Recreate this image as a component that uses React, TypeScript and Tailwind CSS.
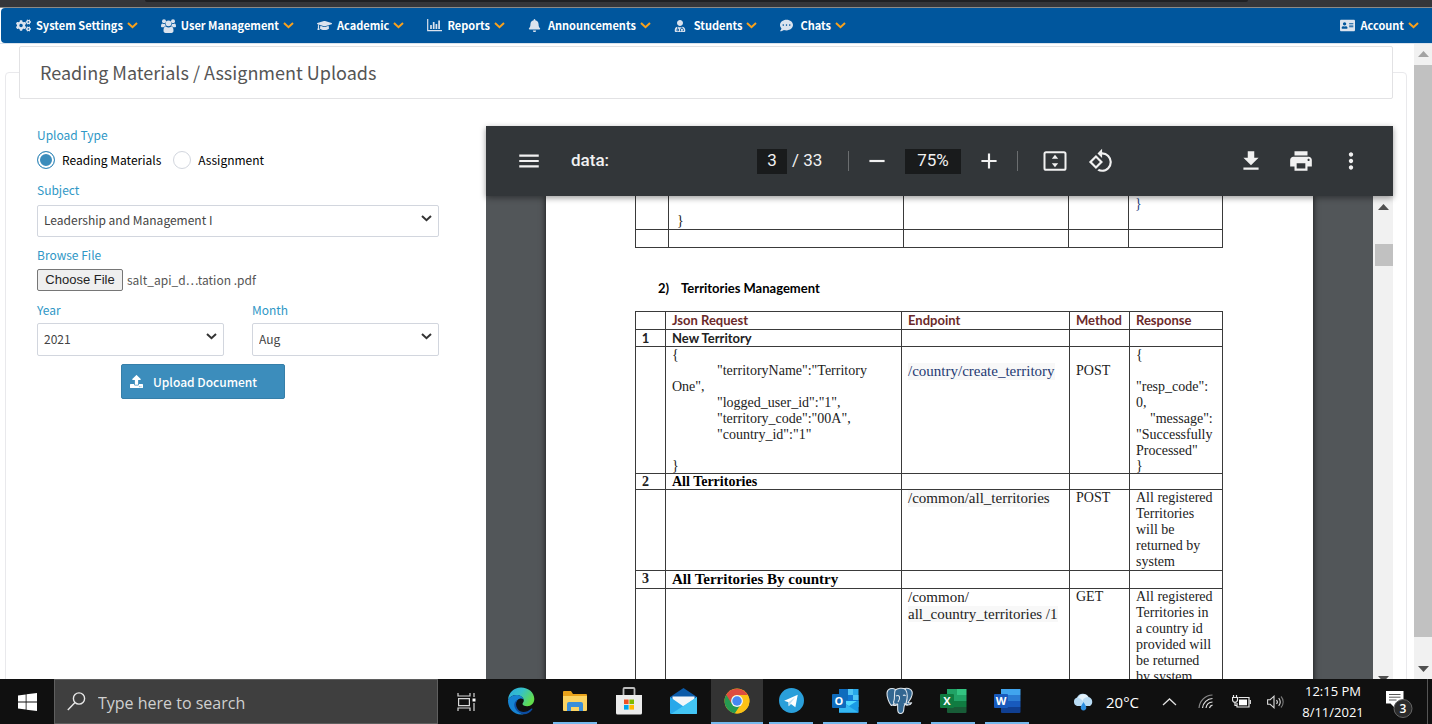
import { useRef, useState } from 'react'
import type { ReactNode } from 'react'
import { FaAddressCard, FaBell, FaCogs, FaCommentDots, FaGraduationCap, FaUpload, FaUserMd } from 'react-icons/fa'
import { MdAdd, MdFileDownload, MdMenu, MdMoreVert, MdPrint, MdRemove, MdRotate90DegreesCcw } from 'react-icons/md'

function BarChartIcon() {
  return (
    <svg width="15" height="13" viewBox="0 0 15 13" fill="none" stroke="currentColor">
      <path d="M.7 0v11.6H15" strokeWidth="1.2" />
      <path d="M4 10V6M6.7 10V3M9.4 10V5M12.1 10V1.5" strokeWidth="1.7" />
    </svg>
  )
}

function UsersIcon() {
  return (
    <svg width="15" height="14" viewBox="0 0 15 14" fill="currentColor">
      <circle cx="3" cy="2.2" r="2" />
      <circle cx="12" cy="2.2" r="2" />
      <circle cx="7.500" cy="4.300" r="2.900" />
      <path d="M0 7.500C0 5.500.500 4.500 1.500 4.500c1 .600 1.800.600 2.500.300.100 1 .300 1.700.900 2.400-1 0-1.700.400-2.200 1H1.200C.500 8.200 0 8 0 7.500zM15 7.500c0-2-.500-3-1.500-3-1 .600-1.800.600-2.500.300-.100 1-.300 1.700-.900 2.400 1 0 1.700.400 2.200 1h1.500c.700 0 1.200-.200 1.200-.700z" />
      <path d="M2.500 11.800c0-2.300.600-4.200 2.300-4.200 1.700 1.300 3.700 1.300 5.400 0 1.700 0 2.300 1.900 2.300 4.200 0 1.300-.800 2.200-2 2.200h-6c-1.200 0-2-.900-2-2.200z" />
    </svg>
  )
}

function Chevron({ className }: { className: string }) {
  return (
    <svg width="11" height="7" viewBox="0 0 11 7" className={className} fill="none" stroke="currentColor" strokeWidth="2">
      <path d="M1 1l4.5 4.2L10 1" />
    </svg>
  )
}

function NavItem({ icon, label }: { icon: ReactNode; label: string }) {
  return (
    <a href="#" className="flex items-center">
      <span className="flex w-5 items-center text-[#dbe3ee]">{icon}</span>
      {label}
      <Chevron className="ml-1 text-[#f9a11b]" />
    </a>
  )
}

function NavBar() {
  return (
    <nav className="ml-px flex h-[35px] shrink-0 items-center gap-[23px] rounded-l-sm bg-[#00569d] pr-[13px] pl-[15px] text-[11px] font-bold text-white">
      <NavItem icon={<FaCogs size={15} />} label="System Settings" />
      <NavItem icon={<UsersIcon />} label="User Management" />
      <NavItem icon={<FaGraduationCap size={15} />} label="Academic" />
      <NavItem icon={<BarChartIcon />} label="Reports" />
      <NavItem icon={<FaBell size={13} />} label="Announcements" />
      <NavItem icon={<FaUserMd size={12} />} label="Students" />
      <NavItem icon={<FaCommentDots size={13} />} label="Chats" />
      <div className="ml-auto">
        <NavItem icon={<FaAddressCard size={15} />} label="Account" />
      </div>
    </nav>
  )
}

function Select({ id, label, options, className }: { id: string; label: string; options: string[]; className: string }) {
  return (
    <div className="flex flex-1 flex-col">
      <label htmlFor={id} className="text-[#2f97c6]">{label}</label>
      <div className={className}>
        <select id={id} className="h-full w-full appearance-none rounded-xs border border-[#d2d6de] bg-white px-1.5 pb-0.5 text-[#444]">
          {options.map((option) => (
            <option key={option}>{option}</option>
          ))}
        </select>
        <Chevron className="pointer-events-none absolute top-2.5 right-[7px] text-[#333]" />
      </div>
    </div>
  )
}

function UploadForm() {
  const fileInput = useRef<HTMLInputElement>(null)
  const [fileName, setFileName] = useState('salt_api_d…tation .pdf')
  const radio =
    'mr-[7px] size-[18px] appearance-none rounded-full border border-[#d2d6de] bg-white checked:border-[#3c8dbc] checked:bg-[#3c8dbc] checked:shadow-[inset_0_0_0_2px_white]'

  return (
    <form className="w-[402px] shrink-0 text-[12px] leading-[18px]">
      <div className="text-[#2f97c6]">Upload Type</div>
      <div className="mt-[7px] flex gap-3 text-black">
        <label className="flex items-center">
          <input type="radio" name="type" defaultChecked className={radio} />
          Reading Materials
        </label>
        <label className="flex items-center">
          <input type="radio" name="type" className={radio} />
          Assignment
        </label>
      </div>
      <div className="mt-3 flex">
        <Select id="subject" label="Subject" options={['Leadership and Management I']} className="relative mt-1.5 h-8" />
      </div>
      <label htmlFor="file" className="mt-[9px] block text-[#2f97c6]">Browse File</label>
      <div className="mt-[5px] flex h-[22px] items-center">
        <input
          id="file"
          type="file"
          ref={fileInput}
          className="hidden"
          onChange={(e) => setFileName(e.target.files?.[0]?.name ?? fileName)}
        />
        <button
          type="button"
          onClick={() => fileInput.current?.click()}
          className="mr-1 h-full w-[86px] rounded-xs border border-[#767676] bg-[#efefef] font-['Liberation_Sans',sans-serif] text-[13px] leading-5 text-[#222]"
        >
          Choose File
        </button>
        <span className="text-[#555]">{fileName}</span>
      </div>
      <div className="mt-[10px] flex gap-7">
        <Select id="year" label="Year" options={['2021', '2020']} className="relative mt-1 h-[33px]" />
        <Select id="month" label="Month" options={['Aug', 'Sep']} className="relative mt-1 h-[33px]" />
      </div>
      <button type="button" className="mt-2 ml-[84px] flex h-[35px] w-[164px] items-center rounded-xs border border-[#367fa9] bg-[#3c8dbc] px-2 font-medium text-white">
        <FaUpload size={13} className="mr-2.5" />
        Upload Document
      </button>
    </form>
  )
}

function PdfToolbar() {
  return (
    <div className="relative z-10 flex h-[70px] shrink-0 items-center bg-[#323639] pr-[29px] pl-[30px] font-['Roboto',sans-serif] text-[17px] text-[#f1f1f1] shadow-[0_2px_6px_rgba(0,0,0,0.4)]">
      <div className="flex w-[241px] items-center gap-[29px]">
        <button type="button" aria-label="Menu"><MdMenu size={26} /></button>
        <span className="font-medium">data:</span>
      </div>
      <input aria-label="Page" defaultValue="3" className="h-[25px] w-[30px] bg-[#191b1c] text-center" />
      <span className="w-9 pl-[5px] whitespace-nowrap">/ 33</span>
      <span className="ml-[25px] h-5 w-px bg-[#6b6e70]" />
      <button type="button" aria-label="Zoom out" className="mx-[15px]"><MdRemove size={26} /></button>
      <input aria-label="Zoom" defaultValue="75%" className="h-[25px] w-14 bg-[#191b1c] text-center" />
      <button type="button" aria-label="Zoom in" className="mx-[15px]"><MdAdd size={26} /></button>
      <span className="h-5 w-px bg-[#6b6e70]" />
      <button type="button" aria-label="Fit to page" className="ml-6">
        <svg width="26" height="26" viewBox="0 0 26 26" fill="currentColor">
          <rect x="2.500" y="4.200" width="21" height="17.600" rx="1.600" fill="none" stroke="currentColor" strokeWidth="2" />
          <path d="M13 6.800l3.200 4H9.800zM13 19.200l3.200-4H9.800z" />
        </svg>
      </button>
      <button type="button" aria-label="Rotate" className="ml-5"><MdRotate90DegreesCcw size={26} /></button>
      <div className="ml-auto flex gap-6">
        <button type="button" aria-label="Download"><MdFileDownload size={26} /></button>
        <button type="button" aria-label="Print"><MdPrint size={26} /></button>
        <button type="button" aria-label="More"><MdMoreVert size={26} /></button>
      </div>
    </div>
  )
}

const cell = 'border border-[#3a3a3a] px-1.5 align-top'
const num = 'border border-[#3a3a3a] p-0 pr-2.5 text-center align-top font-bold'
const calibri = "font-['Lato',sans-serif] font-bold text-[13px] leading-4"
const calibriHead = "font-['Lato',sans-serif] font-bold text-[13px] leading-[17px]"

function PdfPage() {
  return (
    <div className="mx-auto w-[767px] shrink-0 bg-white pl-[89px] font-['Liberation_Serif',serif] text-[14px] leading-4 text-[#222] shadow-[0_0_6px_rgba(0,0,0,0.8)]">
      <table className="w-[588px] table-fixed border-collapse">
        <colgroup>
          <col className="w-[33px]" />
          <col className="w-[235px]" />
          <col className="w-[165px]" />
          <col className="w-[60px]" />
          <col />
        </colgroup>
        <tbody>
          <tr className="h-[33px]">
            <td className="border border-t-0 border-[#3a3a3a]" />
            <td className="border border-t-0 border-[#3a3a3a] p-0 pl-2 align-bottom">{'}'}</td>
            <td className="border border-t-0 border-[#3a3a3a]" />
            <td className="border border-t-0 border-[#3a3a3a]" />
            <td className="border border-t-0 border-[#3a3a3a] p-0 pl-1.5 align-top text-[#1f3f80]">{'}'}</td>
          </tr>
          <tr className="h-[18px]">
            <td className={cell} />
            <td className={cell} />
            <td className={cell} />
            <td className={cell} />
            <td className={cell} />
          </tr>
        </tbody>
      </table>

      <h2 className="mt-8 mb-[15px] flex gap-3 pl-[23px] font-['Lato',sans-serif] text-[13px] font-bold leading-4 text-black">
        <span>2)</span>
        <span>Territories Management</span>
      </h2>

      <table className="w-[588px] table-fixed border-collapse">
        <colgroup>
          <col className="w-[30px]" />
          <col className="w-[236px]" />
          <col className="w-[168px]" />
          <col className="w-[60px]" />
          <col />
        </colgroup>
        <thead className="text-left text-[#6b2a2a]">
          <tr className="h-[18px]">
            <th className={cell} />
            <th className={cell}><div className={calibriHead}>Json Request</div></th>
            <th className={cell}><div className={calibriHead}>Endpoint</div></th>
            <th className={cell}><div className={calibriHead}>Method</div></th>
            <th className={cell}><div className={calibriHead}>Response</div></th>
          </tr>
        </thead>
        <tbody>
          <tr className="h-[17px]">
            <td className={num}><div className={calibri}>1</div></td>
            <td className={cell}><div className={calibri}>New Territory</div></td>
            <td className={cell} />
            <td className={cell} />
            <td className={cell} />
          </tr>
          <tr>
            <td className={cell} />
            <td className={cell}>
              <div>{'{'}</div>
              <div className="indent-[45px]">"territoryName":"Territory One",</div>
              <div className="pl-[45px]">"logged_user_id":"1",</div>
              <div className="pl-[45px]">"territory_code":"00A",</div>
              <div className="pl-[45px]">"country_id":"1"</div>
              <div className="pt-[15px] leading-[15px]">{'}'}</div>
            </td>
            <td className={cell}>
              <div className="mt-4 w-fit bg-[#f8f8f8] text-[15px] leading-[17px] text-[#1f3a73]">/country/create_territory</div>
            </td>
            <td className={cell}><div className="pt-4">POST</div></td>
            <td className={cell}>
              <div>{'{'}</div>
              <div className="pt-4">"resp_code":</div>
              <div>0,</div>
              <div className="pl-3.5">"message":</div>
              <div>"Successfully</div>
              <div className="leading-[15px]">Processed"</div>
              <div className="leading-[15px]">{'}'}</div>
            </td>
          </tr>
          <tr className="h-4">
            <td className={num}><div className="leading-[15px]">2</div></td>
            <td className={cell}><div className="font-bold leading-[15px] text-black">All Territories</div></td>
            <td className={cell} />
            <td className={cell} />
            <td className={cell} />
          </tr>
          <tr>
            <td className={cell} />
            <td className={cell} />
            <td className={cell}><div className="w-fit bg-[#f8f8f8] text-[15px] leading-[17px]">/common/all_territories</div></td>
            <td className={cell}>POST</td>
            <td className={cell}>All registered Territories will&nbsp;be returned by system</td>
          </tr>
          <tr className="h-[18px]">
            <td className={num}>3</td>
            <td className={cell}><div className="text-[15px] font-bold leading-[17px] text-black">All Territories By country</div></td>
            <td className={cell} />
            <td className={cell} />
            <td className={cell} />
          </tr>
          <tr>
            <td className={cell} />
            <td className={cell} />
            <td className={cell}>
              <div className="text-[15px] leading-[17px]">
                /common/<br />
                <span className="bg-[#f8f8f8] whitespace-nowrap">all_country_territories /1</span>
              </div>
            </td>
            <td className={cell}>GET</td>
            <td className={cell}>All registered Territories in a&nbsp;country&nbsp;id provided will be returned by&nbsp;system</td>
          </tr>
        </tbody>
      </table>
    </div>
  )
}

function Arrow({ down, className }: { down?: boolean; className: string }) {
  return (
    <svg width="11" height="6" viewBox="0 0 11 6" fill="currentColor" className={className}>
      <path d={down ? 'M0 0h11L5.500 6z' : 'M0 6h11L5.500 0z'} />
    </svg>
  )
}

function PdfViewer() {
  return (
    <div className="flex min-w-0 flex-1 flex-col">
      <PdfToolbar />
      <div className="flex overflow-hidden bg-[#525659]">
        <div className="flex min-w-0 flex-1">
          <PdfPage />
        </div>
        <div className="flex w-5 flex-col items-center bg-[#f1f1f1] pt-2 pb-1">
          <Arrow className="text-[#505050]" />
          <div className="mt-[34px] ml-0.5 h-[22px] w-[18px] bg-[#c1c1c1]" />
          <Arrow down className="mt-auto text-[#505050]" />
        </div>
      </div>
    </div>
  )
}

function EdgeIcon() {
  return (
    <svg width="28" height="28" viewBox="0 0 28 28">
      <defs>
        <linearGradient id="edgeTop" x1="0" y1="0" x2="1" y2="0.500">
          <stop offset="0" stopColor="#2aa7e0" />
          <stop offset="0.500" stopColor="#35c1c9" />
          <stop offset="1" stopColor="#62dd4c" />
        </linearGradient>
      </defs>
      <path d="M1 13C1.500 5.500 7 .500 14 .500c7.500 0 13.300 5 13.300 11.500 0 4.500-3.300 7.200-7 7.200-3.300 0-4.800-1.200-4.800-2.300 0-.900 1.300-1.400 1.300-3.400C16.800 10.500 13.500 8 9.500 8 5.500 8 2.300 10 1 13z" fill="url(#edgeTop)" />
      <path d="M1 13C2.300 10 5.500 8 9.500 8c3.800 0 6.500 2 7.100 4.300-1-.800-2.300-1-3.400-.800-2.700.500-4.400 3-4.400 6 0 4.500 3.500 8.700 8 9.700-1 .200-1.800.300-2.800.300C6.500 27.500.700 21 1 13z" fill="#1683d2" />
      <path d="M10.500 13c-2 2.500-2 6.300.300 9.300 2.800 3.600 8.500 4 13.700-.700.600-.500 1.200.200.800.800-2 3-5 4.600-8.500 4.900-5.500-.800-9.500-5-9.500-9.500 0-2.200 1.300-4 3.200-4.800z" fill="#0c4da2" />
    </svg>
  )
}

function ExplorerIcon() {
  return (
    <svg width="26" height="22" viewBox="0 0 26 22">
      <path d="M1 2a1 1 0 0 1 1-1h7l2 3h13a1 1 0 0 1 1 1v15H1z" fill="#e9a31b" />
      <path d="M1 6h24v14a1 1 0 0 1-1 1H2a1 1 0 0 1-1-1z" fill="#fcd462" />
      <path d="M5 21v-7a2 2 0 0 1 2-2h12a2 2 0 0 1 2 2v7h-4v-4H9v4z" fill="#3a8fd9" />
    </svg>
  )
}

function StoreIcon() {
  return (
    <svg width="28" height="28" viewBox="0 0 28 28">
      <path d="M8.500 9V2a1 1 0 0 1 1-1h9a1 1 0 0 1 1 1v7" fill="none" stroke="#bdbdbd" strokeWidth="1.800" />
      <path d="M1 8h26v18a1.500 1.500 0 0 1-1.500 1.500h-23A1.500 1.500 0 0 1 1 26z" fill="#ececec" />
      <path d="M9 12.500h4.600v4.600H9z" fill="#f25022" />
      <path d="M14.400 12.500H19v4.600h-4.600z" fill="#7fba00" />
      <path d="M9 18h4.600v4.600H9z" fill="#00a4ef" />
      <path d="M14.400 18H19v4.600h-4.600z" fill="#ffb900" />
    </svg>
  )
}

function MailIcon() {
  return (
    <svg width="27" height="26" viewBox="0 0 27 26">
      <path d="M0 9L13.500 0 27 9v6H0z" fill="#0a5aa8" />
      <path d="M2.500 8.500h22V14L13.500 20 2.500 14z" fill="#f3f6f9" />
      <path d="M0 9l13.500 9.500L27 9v16a1 1 0 0 1-1 1H1a1 1 0 0 1-1-1z" fill="#28a8ea" />
      <path d="M27 9v16a1 1 0 0 1-1 1H1z" fill="#43c5f4" />
    </svg>
  )
}

function ChromeIcon() {
  return (
    <svg width="26" height="26" viewBox="0 0 48 48">
      <circle cx="24" cy="24" r="23" fill="#fbc116" />
      <path d="M24 24L4.100 12.500a23 23 0 0 0 16.200 34.200L31 30z" fill="#269a51" />
      <path d="M4.100 12.500A23 23 0 0 1 44 13H24a11 11 0 0 0-9.600 16.500z" fill="#dd4c3f" />
      <path d="M24 13h20a23 23 0 0 1-23.500 33.700L33.500 29.500z" fill="#fbc116" />
      <circle cx="24" cy="24" r="11" fill="#f5f5f5" />
      <circle cx="24" cy="24" r="8.800" fill="#4688f1" />
    </svg>
  )
}

function TelegramIcon() {
  return (
    <svg width="25" height="25" viewBox="0 0 24 24">
      <circle cx="12" cy="12" r="12" fill="#2a9fda" />
      <path d="M5 12.300L18 6.500l-2.300 12-4.200-3.200-2.200 2.200-.200-3.800z" fill="#fff" />
      <path d="M9.100 13.700l6.500-4.900-4.300 5.700-2 3z" fill="#c3dff0" />
    </svg>
  )
}

function OfficeIcon({ letter, kind }: { letter: string; kind: 'outlook' | 'excel' | 'word' }) {
  const colors = {
    outlook: ['#28a8ea', '#0f78d4', '#50d9ff', '#14447d', '#0f6cbd'],
    excel: ['#33c481', '#21a366', '#107c41', '#185c37', '#107c41'],
    word: ['#41a5ee', '#2b7cd3', '#185abd', '#103f91', '#185abd'],
  }[kind]
  return (
    <svg width="27" height="26" viewBox="0 0 27 26">
      <path d="M7 1h19.500v6H7z" fill={colors[0]} />
      <path d="M7 7h19.500v6H7z" fill={colors[1]} />
      <path d="M7 13h19.500v6H7z" fill={colors[2]} />
      <path d="M7 19h19.500v5a1 1 0 0 1-1 1H8a1 1 0 0 1-1-1z" fill={colors[3]} />
      {kind === 'outlook' && (
        <>
          <path d="M7 1h9v11H7z" fill="#0f6cbd" />
          <path d="M16 1h5v6h-5zM21 7h5.500v5H21z" fill="#50c5f5" />
          <path d="M7 12l10 6 9.500-6v12.500H7z" fill="#1a9be6" />
          <path d="M7 12l19.500 12.500H7z" fill="#35b8f1" />
        </>
      )}
      {kind === 'excel' && <path d="M7 1h10v12H7z" fill="#21a366" />}
      <rect x="0" y="6" width="14" height="14" rx="1" fill={colors[4]} />
      <text x="7" y="17" textAnchor="middle" fontSize="11" fontWeight="700" fill="#fff" fontFamily="Open Sans, sans-serif">
        {letter}
      </text>
    </svg>
  )
}

function PostgresIcon() {
  return (
    <svg width="27" height="27" viewBox="0 0 27 27" fill="#336791" stroke="#dfe6ec" strokeWidth="1.100" strokeLinejoin="round">
      <path d="M9.500 2.500C6 .500 1.500 1.500 1 6c-.300 3.500 2 10 4 12 1 1 2.200-.200 4-2z" />
      <path d="M17 2c4-1.500 8-.500 9 2.500 1 3.500-2 8.500-4 11 1 .800 2.500.500 3.700.300-1 2-3.500 2.500-5.700 2z" />
      <path d="M9 3.500c2-2.500 8-3 10.500-1 2 3 2 9 .500 14-2 .500-2 3-2.300 6.500-.200 2-1.200 3.500-3.200 3.500-2.200 0-2.700-1.500-2.800-4-.100-2 .200-4-.300-5.500-3.500 1-4.400-1-3.400-3.500 1-3 0-6.500 1-10z" />
      <path d="M10 9c1.500-1 3-.500 3.500 1s-.500 3.500-1.500 5M17 8.500c1-.700 2-.500 2.500.500M12 17c-1 1.500-3.500 2-5 1M18 16.500c1 1.500 2.500 1.500 4 1.200" fill="none" />
    </svg>
  )
}

const apps: { name: string; icon: ReactNode; open?: boolean; active?: boolean }[] = [
  { name: 'Edge', icon: <EdgeIcon /> },
  { name: 'File Explorer', icon: <ExplorerIcon />, open: true },
  { name: 'Store', icon: <StoreIcon /> },
  { name: 'Mail', icon: <MailIcon /> },
  { name: 'Chrome', icon: <ChromeIcon />, active: true },
  { name: 'Telegram', icon: <TelegramIcon />, open: true },
  { name: 'Outlook', icon: <OfficeIcon kind="outlook" letter="O" />, open: true },
  { name: 'pgAdmin', icon: <PostgresIcon />, open: true },
  { name: 'Excel', icon: <OfficeIcon kind="excel" letter="X" />, open: true },
  { name: 'Word', icon: <OfficeIcon kind="word" letter="W" />, open: true },
]

function Taskbar() {
  return (
    <footer className="flex h-[45px] shrink-0 items-stretch bg-[#101010] font-['Open_Sans',sans-serif] text-white">
      <button type="button" aria-label="Start" className="flex w-[54px] items-center justify-center">
        <svg width="19" height="18" viewBox="0 0 19 18" fill="currentColor">
          <path d="M0 2.500L7.700 1.400v7.200H0zM8.500 1.300L19 0v8.600H8.500zM0 9.400h7.700v7.200L0 15.500zM8.500 9.400H19V18L8.500 16.700z" />
        </svg>
      </button>
      <label className="flex w-96 items-center border border-[#5f5f5f] bg-[#3f3f3f] pl-3">
        <svg width="19" height="19" viewBox="0 0 19 19" fill="none" stroke="#e8e8e8" strokeWidth="1.400" className="mr-3">
          <circle cx="12" cy="6.500" r="5.600" />
          <path d="M8 10.500L.800 18" />
        </svg>
        <input aria-label="Search" placeholder="Type here to search" className="min-w-0 flex-1 pt-0.5 text-[16px] placeholder:text-[#d0d0d0]" />
      </label>
      <button type="button" aria-label="Task View" className="flex w-14 items-center justify-center">
        <svg width="19" height="18" viewBox="0 0 19 18" fill="none" stroke="#d8d8d8" strokeWidth="1.200">
          <path d="M1 0v3h12V0M1 18v-3h12v3M1.600 5.600h10.800v7H1.600zM17 0v4M17 10v8" />
          <path d="M15.500 5.500h3v3h-3z" fill="#fff" stroke="none" />
        </svg>
      </button>
      {apps.map((app) => (
        <button key={app.name} type="button" aria-label={app.name} className="flex w-[54px] justify-center">
          <span
            className={
              app.active
                ? 'flex h-full w-[52px] items-center justify-center border-b-2 border-[#76b9ed] bg-[#333]'
                : app.open
                  ? 'flex h-full w-11 items-center justify-center border-b-2 border-[#76b9ed]'
                  : 'flex h-full w-11 items-center justify-center border-b-2 border-transparent'
            }
          >
            {app.icon}
          </span>
        </button>
      ))}
      <div className="ml-auto flex items-center">
        <svg width="23" height="18" viewBox="0 0 23 18">
          <path d="M5 13a4.500 4.500 0 0 1 0-8.500A6.500 6.500 0 0 1 16.500 4 5 5 0 0 1 18 13z" fill="#b9dcf5" />
          <path d="M6 5A6 6 0 0 1 16.500 4c-3 0-5 1-6 4C9.500 6 8 5 6 5z" fill="#e6f3fc" />
          <path d="M11.500 9c1.500 2.500 2.800 4 2.800 5.600a2.800 2.800 0 0 1-5.600 0C8.700 13 10 11.500 11.500 9z" fill="#2f8fe0" />
        </svg>
        <span className="ml-[11px] w-14 pt-0.5 text-[15px]">20°C</span>
        <svg width="15" height="8" viewBox="0 0 15 8" fill="none" stroke="#e0e0e0" strokeWidth="1.300">
          <path d="M1 7l6.500-6L14 7" />
        </svg>
        <svg width="16" height="15" viewBox="0 0 16 15" fill="none" strokeWidth="1.200" className="ml-[21px]">
          <path d="M1 14A14 14 0 0 1 14.500 1" stroke="#888" />
          <path d="M4.500 14A10.500 10.500 0 0 1 14.500 4.500M8 14a7 7 0 0 1 6.500-6M11.500 14a4 4 0 0 1 3-2.800" stroke="#ddd" />
        </svg>
        <svg width="19" height="13" viewBox="0 0 19 13" fill="none" stroke="#e8e8e8" strokeWidth="1.200" className="ml-[18px]">
          <path d="M1.500 0v2.500M4.500 0v2.500M.500 2.500h5v2.300a2.500 2.500 0 0 1-5 0zM3 7v3.500h2" />
          <path d="M6.500 2.500H17V12H5V8" />
          <path d="M7 4.500h8v5.800H7z" fill="#fff" stroke="none" />
          <path d="M18.300 5v4" />
        </svg>
        <svg width="18" height="14" viewBox="0 0 18 14" fill="none" stroke="#ddd" strokeWidth="1.100" className="ml-4">
          <path d="M.600 4.700h2.600L7 1.200v11.600L3.200 9.300H.600z" />
          <path d="M9.500 5a3 3 0 0 1 0 4M11.700 3.200a5.500 5.500 0 0 1 0 7.600" />
          <path d="M14 1.500a8 8 0 0 1 0 11" stroke="#777" />
        </svg>
        <div className="ml-3 w-[72px] text-center text-[13px] leading-[21px]">
          <div>12:15 PM</div>
          <div>8/11/2021</div>
        </div>
        <svg width="28" height="28" viewBox="0 0 28 28" className="mt-1 ml-4">
          <path d="M1 1h17.500v12.500H10V18l-4.500-4.500H1z" fill="#fff" />
          <path d="M4 4.500h11.500M4 7.200h11.500M4 10h7.500" stroke="#555" />
          <circle cx="18" cy="18.500" r="9" fill="#2b2b2b" stroke="#666" />
          <text x="18" y="22.500" textAnchor="middle" fontSize="12" fontWeight="600" fill="#fff" fontFamily="Open Sans, sans-serif">3</text>
        </svg>
        <div className="ml-[14px] h-[45px] w-[5px] border-l border-[#555]" />
      </div>
    </footer>
  )
}

export default function App() {
  return (
    <div className="flex h-screen flex-col overflow-hidden bg-white font-['Noto_Sans_CJK_SC',sans-serif]">
      <div className="h-2 shrink-0 border-b border-[#8d8b88] bg-[#35363a] pr-[184px] pl-[145px]">
        <div className="h-0.5 rounded-b-full bg-[#202124]" />
      </div>
      <NavBar />
      <div className="flex min-h-0 flex-1 border-t border-[#d9e2ec]">
        <main className="min-w-0 flex-1 overflow-hidden pt-0.5 pr-[7px] pl-[5px]">
          <fieldset className="min-h-full rounded-sm border border-[#e9e9ec] px-[13px]">
            <legend className="h-[53px] w-full rounded-xs border border-[#e2e2e4] px-5 text-[18px] leading-[50px] text-[#555]">
              Reading Materials / Assignment Uploads
            </legend>
            <div className="flex gap-[47px] pt-[27px] pl-[18px]">
              <UploadForm />
              <PdfViewer />
            </div>
          </fieldset>
        </main>
        <div className="flex w-[18px] shrink-0 flex-col items-center bg-[#f1f1f1] py-[7px]">
          <Arrow className="text-[#a3a3a3]" />
          <div className="my-2 w-full flex-[574] bg-[#c1c1c1]" />
          <div className="flex-[21]" />
          <Arrow down className="text-[#505050]" />
        </div>
      </div>
      <Taskbar />
    </div>
  )
}
